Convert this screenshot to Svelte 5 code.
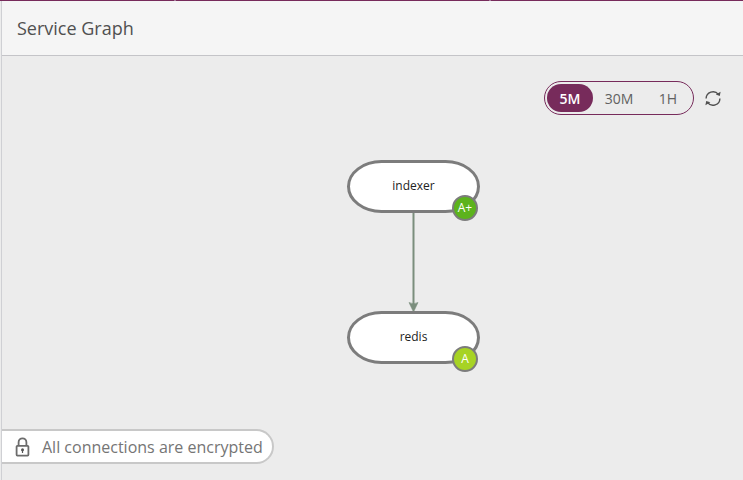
<script>
  const ranges = ['5M', '30M', '1H'];
  let active = $state('5M');
  const nodes = [
    { name: 'indexer', y: 104, grade: 'A+', color: '#5cb31c' },
    { name: 'redis', y: 255, grade: 'A', color: '#a7d324' }
  ];
</script>

<div class="page">
  <div class="strip"><i></i><i></i></div>
  <main>
    <header>Service Graph</header>
    <section>
      <svg class="graph" width="741" height="424" viewBox="0 0 741 424">
        <path d="M411.5 156V250" stroke="#7b8e7d" stroke-width="2" />
        <path d="M407 246.5 Q411.5 249 416 246.5 L411.5 256Z" fill="#7b8e7d" stroke="#7b8e7d" stroke-width=".6" />
        {#each nodes as node}
          <rect x="346.5" y={node.y + 1.5} width="130" height="50" rx="33" ry="25" fill="#fff" stroke="#7c7c7c" stroke-width="3" />
          <text class="name" x="411.5" y={node.y + 30}>{node.name}</text>
          <circle cx="463" cy={node.y + 48} r="12" fill={node.color} stroke="#7c7c7c" stroke-width="2" />
          <text class="grade" x="463" y={node.y + 52}>{node.grade}</text>
        {/each}
      </svg>

      <div class="controls">
        <div class="ranges">
          {#each ranges as range}
            <button class:active={active === range} onclick={() => (active = range)}>{range}</button>
          {/each}
        </div>
        <svg class="refresh" width="18" height="18" viewBox="0 0 18 18" fill="none" stroke="#505050" stroke-width="1.4">
          <path d="M2.1 9.6A6.9 6.9 0 0 1 14.4 5.4M15.9 9.4A6.9 6.9 0 0 1 3.6 13.6" />
          <path d="M16.6 2.8L15.8 7.1L11.8 5.6zM1.4 16.2L2.2 11.9L6.4 13.2z" fill="#505050" stroke="none" />
        </svg>
      </div>

      <div class="notice">
        <svg width="15" height="20" viewBox="0 0 15 20" fill="none" stroke="#6c6c6c" stroke-width="1.8">
          <rect x="1.6" y="8.8" width="11.8" height="9.8" rx=".8" />
          <path d="M3.6 8.8V5.2a3.9 3.9 0 0 1 7.8 0V8.8" />
          <circle cx="7.5" cy="12.7" r="1.5" fill="#555" stroke="none" />
          <path d="M7.5 12.8v3.2" stroke="#555" stroke-width="1.2" />
        </svg>
        <span>All connections are encrypted</span>
      </div>
    </section>
  </main>
</div>

<style>
  .page {
    box-sizing: border-box;
    width: 743px;
    height: 480px;
    overflow: hidden;
    display: flex;
    flex-direction: column;
    background: #ececec;
    font-family: 'Open Sans', 'Noto Sans', sans-serif;
  }
  .strip {
    height: 1px;
    flex: none;
    display: flex;
    gap: 313px;
    padding-left: 174px;
    background: #772b5b;
  }
  .strip i {
    width: 2px;
    background: #a5799a;
  }
  main {
    flex: 1;
    display: flex;
    flex-direction: column;
    border-left: 1px solid #cfd0d4;
    margin-left: 1px;
  }
  header {
    box-sizing: border-box;
    height: 55px;
    padding-left: 15px;
    line-height: 54px;
    font-size: 18px;
    color: #505050;
    background: #f5f5f5;
    border-bottom: 1px solid #c4c4c8;
  }
  section {
    position: relative;
    flex: 1;
    display: flex;
    flex-direction: column;
    justify-content: space-between;
  }
  .graph {
    position: absolute;
    left: 0;
    top: 0;
  }
  .graph text {
    text-anchor: middle;
  }
  .name {
    font-size: 12px;
    fill: #222;
  }
  .grade {
    font-size: 12px;
    font-weight: 500;
    fill: #fff;
  }
  .controls {
    position: relative;
    display: flex;
    align-items: center;
    justify-content: flex-end;
    gap: 10px;
    margin: 25px 21px 0 0;
  }
  .ranges {
    box-sizing: border-box;
    width: 150px;
    height: 34px;
    display: flex;
    padding: 2px;
    border: 1px solid #772b5b;
    border-radius: 17px;
  }
  button {
    height: 28px;
    width: 52px;
    padding: 0;
    border: 0;
    border-radius: 14px;
    background: none;
    font: 14px/29px 'Open Sans', sans-serif;
    color: #616161;
  }
  button:first-child {
    width: 46px;
  }
  button:last-child {
    width: 46px;
  }
  .active {
    background: #772b5b;
    color: #fff;
    font-weight: 600;
  }
  .notice {
    position: relative;
    box-sizing: border-box;
    width: 272px;
    height: 35px;
    margin-bottom: 16px;
    padding-left: 13px;
    display: flex;
    align-items: center;
    gap: 12px;
    background: #fff;
    border: 2px solid #c8c8c8;
    border-left: 0;
    border-radius: 0 18px 18px 0;
    font-size: 16px;
    color: #757575;
    white-space: nowrap;
  }
</style>
